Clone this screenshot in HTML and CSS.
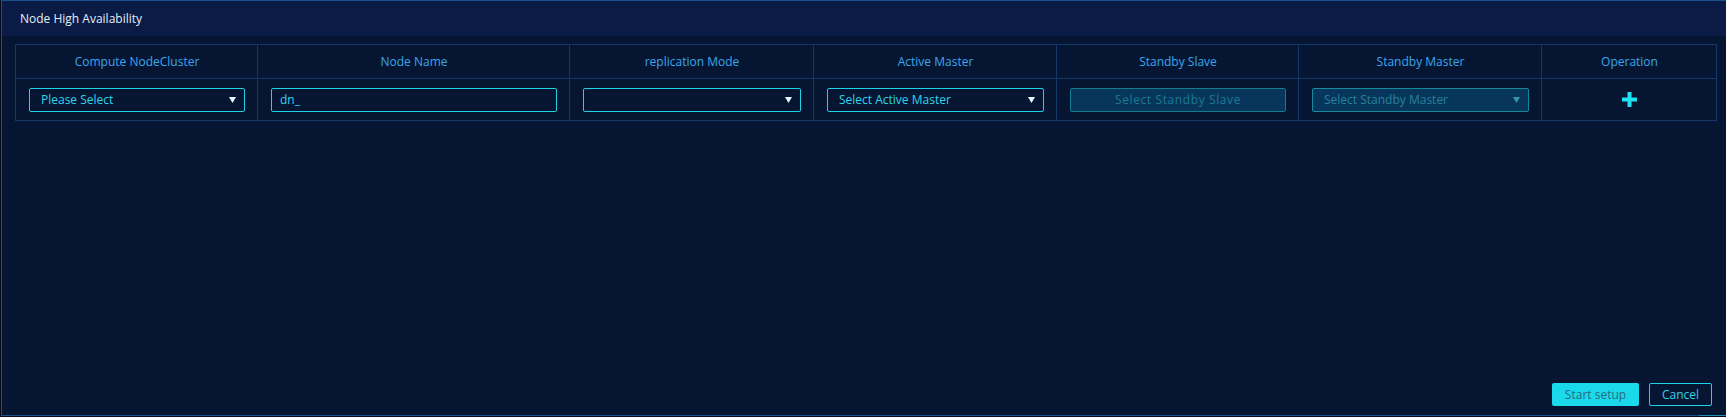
FILE: index.html
```html
<!DOCTYPE html>
<html lang="en">
<head>
<meta charset="utf-8">
<title>Node High Availability</title>
<link rel="stylesheet" href="styles.css">
</head>
<body>
<div class="dialog">
  <div class="dialog-header">Node High Availability</div>
  <div class="dialog-body">
    <table class="grid">
      <colgroup>
        <col class="c1"><col class="c2"><col class="c3"><col class="c4"><col class="c5"><col class="c6"><col class="c7">
      </colgroup>
      <thead>
        <tr>
          <th>Compute NodeCluster</th>
          <th>Node Name</th>
          <th>replication Mode</th>
          <th>Active Master</th>
          <th>Standby Slave</th>
          <th>Standby Master</th>
          <th>Operation</th>
        </tr>
      </thead>
      <tbody>
        <tr>
          <td><div class="select"><span>Please Select</span><svg class="arrow" width="7" height="6" viewBox="0 0 7 6"><path d="M0 0H7L3.5 6Z"/></svg></div></td>
          <td><div class="input">dn_</div></td>
          <td><div class="select"><span></span><svg class="arrow" width="7" height="6" viewBox="0 0 7 6"><path d="M0 0H7L3.5 6Z"/></svg></div></td>
          <td><div class="select"><span>Select Active Master</span><svg class="arrow" width="7" height="6" viewBox="0 0 7 6"><path d="M0 0H7L3.5 6Z"/></svg></div></td>
          <td><div class="input disabled">Select Standby Slave</div></td>
          <td><div class="select disabled"><span>Select Standby Master</span><svg class="arrow" width="7" height="6" viewBox="0 0 7 6"><path d="M0 0H7L3.5 6Z"/></svg></div></td>
          <td class="op"><svg class="plus" width="15" height="15" viewBox="0 0 15 15"><path d="M5.5 0H9.5V5.5H15V9.5H9.5V15H5.5V9.5H0V5.5H5.5Z"/></svg></td>
        </tr>
      </tbody>
    </table>
  </div>
  <div class="dialog-footer">
    <button class="btn primary">Start setup</button>
    <button class="btn ghost">Cancel</button>
  </div>
</div>
</body>
</html>
```

FILE: styles.css
```css
html, body {
  margin: 0;
  padding: 0;
  height: 100%;
  overflow: hidden;
  background: #040c1c;
}
body {
  font-family: "Open Sans", "Noto Sans", sans-serif;
  font-size: 12px;
}
.dialog {
  margin-left: 1px;
  width: 1740px;
  height: 416px;
  box-sizing: border-box;
  border: 1px solid #1a4f90;
  border-right: none;
  background: #061632;
  display: flex;
  flex-direction: column;
  position: relative;
}
.dialog::after {
  content: "";
  position: absolute;
  left: 1697px;
  bottom: -1px;
  width: 40px;
  height: 1px;
  background: #1a8fb0;
}
.dialog-header {
  height: 35px;
  background: #0a1c45;
  color: #e6edf7;
  font-size: 12px;
  line-height: 35px;
  padding-left: 18px;
  flex: none;
}
.dialog-body {
  flex: 1;
  padding: 8px 0 0 13px;
}
.grid {
  border-collapse: collapse;
  table-layout: fixed;
  width: 1701px;
}
.c1 { width: 242px; }
.c2 { width: 312px; }
.c3 { width: 244px; }
.c4 { width: 243px; }
.c5 { width: 242px; }
.c6 { width: 243px; }
.c7 { width: 175px; }
.grid th, .grid td {
  border: 1px solid #12386a;
  padding: 0 12px 0 13px;
}
.grid th {
  height: 33px;
  color: #3aa6ec;
  font-weight: normal;
  text-align: center;
  background: #061632;
}
.grid td {
  height: 41px;
  vertical-align: middle;
}
.select, .input {
  height: 24px;
  box-sizing: border-box;
  border: 1px solid #1fd2e6;
  border-radius: 2px;
  color: #2fd5ea;
  display: flex;
  align-items: center;
}
.select {
  padding: 0 8px 0 11px;
  justify-content: space-between;
}
.select span {
  white-space: nowrap;
}
.arrow {
  fill: #e2f6fb;
  flex: none;
}
.input {
  padding-left: 8px;
}
.input.disabled {
  background: #08355a;
  border-color: #137b94;
  color: #1b7a96;
  justify-content: center;
  padding-left: 0;
  letter-spacing: 0.6px;
}
.select.disabled {
  background: #08355a;
  border-color: #138aa0;
  color: #24839d;
}
.select.disabled .arrow {
  fill: #3595ab;
}
.op {
  text-align: center;
}
.plus {
  fill: #1ee3f2;
  display: block;
  margin: 0 auto;
}
.dialog-footer {
  flex: none;
  display: flex;
  justify-content: flex-start;
  gap: 10px;
  padding: 0 0 9px 1550px;
}
.btn {
  height: 23px;
  box-sizing: border-box;
  border-radius: 2px;
  font-family: inherit;
  font-size: 12px;
  padding: 0;
  cursor: pointer;
}
.btn.primary {
  width: 87px;
  background: #1ad9ea;
  border: none;
  color: #2a6b80;
}
.btn.ghost {
  width: 63px;
  background: transparent;
  border: 1px solid #1fd3e6;
  color: #2fd2e6;
}
```
